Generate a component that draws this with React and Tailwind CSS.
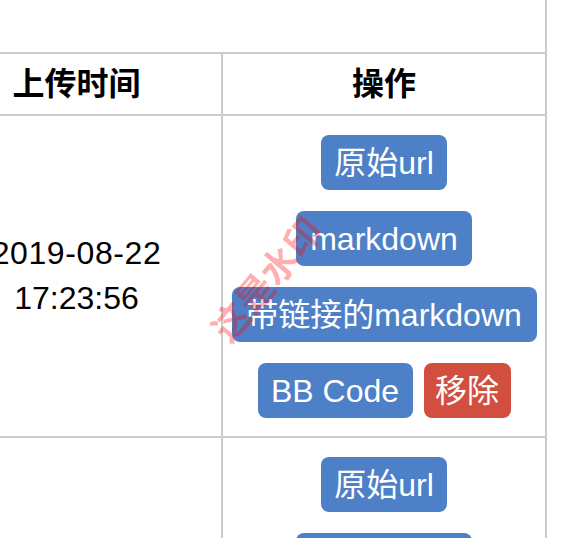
import React from "react";

const FONT = "font-['Liberation_Sans','Noto_Sans_CJK_SC',sans-serif]";

function Btn({ children, w, red }) {
  return (
    <span
      className={`inline-flex h-[55px] items-center justify-center rounded-[8px] text-[32px] leading-none text-white ${
        red ? "bg-[#d24f40]" : "bg-[#4e80c7]"
      } ${w}`}
    >
      {children}
    </span>
  );
}

function Actions() {
  return (
    <div className="flex flex-col items-center gap-[21px]">
      <Btn w="w-[126px]">原始url</Btn>
      <Btn w="w-[176px]">markdown</Btn>
      <Btn w="w-[305px]">带链接的markdown</Btn>
      <div className="flex gap-[11px]">
        <Btn w="w-[155px]">BB Code</Btn>
        <Btn w="w-[87px]" red>
          移除
        </Btn>
      </div>
    </div>
  );
}

function DateCell() {
  return (
    <div className="flex w-[291px] items-center justify-center border-r-2 border-[#cccccc] text-center text-[32px] leading-[45px]">
      <div>
        <div className="tracking-[0.6px]">2019-08-22</div>
        <div>17:23:56</div>
      </div>
    </div>
  );
}

export default function App() {
  return (
    <div className={`h-[538px] w-[570px] overflow-hidden bg-white text-black ${FONT}`}>
      <div className="ml-[-68px] w-[615px] border-r-2 border-[#cccccc]">
        <div className="h-[54px] border-b-2 border-[#cccccc]" />
        <div className="flex h-[62px] border-b-2 border-[#cccccc] text-[32px] font-bold">
          <div className="flex w-[291px] items-center justify-center border-r-2 border-[#cccccc]">
            上传时间
          </div>
          <div className="flex flex-1 items-center justify-center">操作</div>
        </div>
        <div className="relative flex h-[322px] border-b-2 border-[#cccccc]">
          <DateCell />
          <div className="flex flex-1 justify-center pt-[19px]">
            <Actions />
          </div>
          <span className="pointer-events-none absolute left-[336px] top-[164px] -translate-x-1/2 -translate-y-1/2 -rotate-[50deg] whitespace-nowrap text-[37px] font-bold leading-none text-[rgba(255,0,0,0.33)]">
            这是水印
          </span>
        </div>
        <div className="flex h-[322px] border-b-2 border-[#cccccc]">
          <DateCell />
          <div className="flex flex-1 justify-center pt-[19px]">
            <Actions />
          </div>
        </div>
      </div>
    </div>
  );
}
